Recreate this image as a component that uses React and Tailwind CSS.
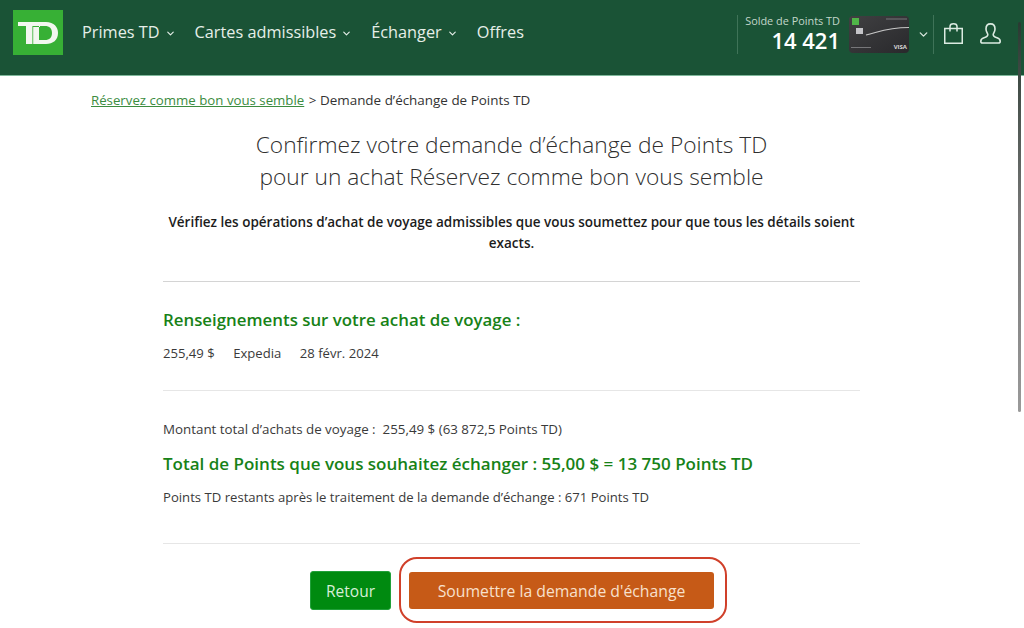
import { ChevronDown } from "lucide-react";

const FONT = "font-['Open_Sans','Noto_Sans',sans-serif]";

const NAV = [
  { label: "Primes TD", menu: true },
  { label: "Cartes admissibles", menu: true },
  { label: "Échanger", menu: true },
  { label: "Offres", menu: false },
];

function TdLogo() {
  return (
    <div className="w-[50px] h-[45px] bg-[#37b035] flex items-center justify-center shrink-0">
      <svg width="40" height="22" viewBox="0 0 40 22">
        <path d="M0 0H22V4H14.4V22H8V4H0Z" fill="#f2f7ef" />
        <path
          fillRule="evenodd"
          d="M15.2 22V5H22V0H28C36 0 40 5 40 11C40 18 35 22 28 22ZM21 4V18H27C31.5 18 34 15.5 34 11C34 6.5 31.5 4 27 4Z"
          fill="#f2f7ef"
        />
      </svg>
    </div>
  );
}

function CardThumb() {
  return (
    <div className="relative w-[60px] h-[37px] mt-[1px] rounded-sm bg-gradient-to-br from-[#404042] to-[#29292c] overflow-hidden shrink-0">
      <div className="absolute left-[3px] top-[2px] w-[7px] h-[7px] bg-[#4fb548]" />
      <div className="absolute left-[7px] top-[12px] w-[7px] h-[6px] bg-[#c4c4c8]" />
      <svg className="absolute inset-0" width="60" height="37" viewBox="0 0 60 37" fill="none">
        <path d="M17 19C30 16 38 11.5 60 11.5" stroke="#c8c8c8" strokeWidth="1.2" />
        <path d="M37 3H58" stroke="#77777a" strokeWidth="1" />
        <path d="M2 31.5H22" stroke="#77777a" strokeWidth="1" />
      </svg>
      <span className="absolute right-[2px] bottom-[2px] text-[6px] leading-[7px] font-bold text-[#d8d8d8]">VISA</span>
    </div>
  );
}

function Header() {
  return (
    <header className="h-[76px] bg-[#1a5336] border-b border-[#7fb89b] flex items-start pt-[10px] pl-[13px] pr-[23px] shrink-0">
      <TdLogo />
      <nav className="flex items-center h-[45px] ml-[19px] gap-[19px] text-[#e6efe9] text-[16.3px]">
        {NAV.map((item) => (
          <span key={item.label} className="flex items-center gap-[5px]">
            {item.label}
            {item.menu && <ChevronDown size={11} strokeWidth={2.5} className="mt-[2px]" />}
          </span>
        ))}
      </nav>
      <div className="ml-auto flex items-start mt-[5px]">
        <div className="h-[39px] border-l border-[#3f7358] pl-[7px] pr-[9px] text-right">
          <div className="text-[10.9px] leading-[13px] text-[#c3d6ca] mt-[-1px]">Solde de Points TD</div>
          <div className="text-[22px] leading-[27px] font-semibold text-white">14 421</div>
        </div>
        <CardThumb />
        <ChevronDown size={13} strokeWidth={2.5} className="text-[#d8e5dd] ml-[8px] mt-[13px]" />
        <div className="h-[39px] border-l border-[#3f7358] ml-[3px] pl-[10px] pt-[8px] flex items-start gap-[17px]">
          <svg width="19" height="21" viewBox="0 0 19 21" fill="none" stroke="#dcebe2" strokeWidth="1.5">
            <path d="M.75 5.5H18.25V20.25H.75Z" />
            <path d="M6 8.5V3.5C6 1.8 7.3.8 9.5.8S13 1.8 13 3.5V8.5" />
          </svg>
          <svg width="21" height="21" viewBox="0 0 21 21" fill="none" stroke="#dcebe2" strokeWidth="1.6">
            <path d="M10.5 .9C13.7 .9 15 3.2 15 6C15 8.6 13.6 10 13.2 11.4C13 13 14.5 14 17 14.8C19.2 15.5 20.2 16.6 20.2 18.2C20.2 19.4 19.6 20 18.4 20H2.6C1.4 20 .8 19.4 .8 18.2C.8 16.6 1.8 15.5 4 14.8C6.5 14 8 13 7.8 11.4C7.4 10 6 8.6 6 6C6 3.2 7.3 .9 10.5 .9Z" />
          </svg>
        </div>
      </div>
    </header>
  );
}

export default function App() {
  return (
    <div className={`relative h-[628px] w-[1024px] overflow-hidden bg-white flex flex-col ${FONT}`}>
      <Header />

      <main className="flex-1 min-h-0 pt-[15px]">
        <div className="pl-[91px] text-[13.25px] leading-[18px] text-[#333]">
          <a className="text-[#3c8c3f] underline">Réservez comme bon vous semble</a>
          <span className="ml-[1px] text-[13.45px]"> &gt; Demande d’échange de Points TD</span>
        </div>

        <div className="w-[697px] ml-[163px]">
          <h1 className="mt-[20px] text-center text-[22.75px] leading-[32px] font-light text-[#2f2f2f]">
            Confirmez votre demande d’échange de Points TD
            <br />
            pour un achat Réservez comme bon vous semble
          </h1>
          <p className="mt-[19px] text-center text-[13.5px] leading-[21px] font-semibold text-[#1c1c1c]">
            Vérifiez les opérations d’achat de voyage admissibles que vous soumettez pour que tous les détails soient
            exacts.
          </p>

          <section className="mt-[27px] border-t border-[#d4d4d4] pt-[26px] pb-[27px]">
            <h2 className="text-[16.85px] leading-[24px] font-semibold text-[#178217]">
              Renseignements sur votre achat de voyage :
            </h2>
            <div className="mt-[11px] flex gap-[18.5px] text-[13.1px] leading-[20px] text-[#3a3a3a]">
              <span>255,49 $</span>
              <span>Expedia</span>
              <span>28 févr. 2024</span>
            </div>
          </section>

          <section className="border-t border-[#e6e6e6] pt-[28px] pb-[36px]">
            <div className="text-[13.35px] leading-[20px] text-[#3a3a3a]">
              Montant total d’achats de voyage :&nbsp; 255,49 $ (63 872,5 Points TD)
            </div>
            <h2 className="mt-[13px] text-[17px] leading-[24px] font-semibold text-[#178217]">
              Total de Points que vous souhaitez échanger : 55,00 $ = 13 750 Points TD
            </h2>
            <div className="mt-[11px] text-[13.13px] leading-[20px] text-[#3a3a3a]">
              Points TD restants après le traitement de la demande d’échange : 671 Points TD
            </div>
          </section>

          <div className="border-t border-[#e6e6e6] pt-[13px] pl-[147px] flex items-center gap-[8px]">
            <button className="w-[81px] h-[39px] pt-[3px] rounded-[3px] bg-[#008a10] border border-[#21a03a] text-[#d8efd8] text-[15.5px]">
              Retour
            </button>
            <div className="w-[328px] h-[66px] rounded-[18px] border-2 border-[#d0402a] flex items-center pl-[8px]">
              <button className="w-[305px] h-[37px] pt-[3px] rounded-[3px] bg-[#c65a17] text-[#f8e0cc] text-[15.75px]">
                Soumettre la demande d'échange
              </button>
            </div>
          </div>
        </div>
      </main>

      {/* overlay scrollbar */}
      <div className="absolute left-[1018px] top-[22px] w-[3px] h-[390px] rounded-full bg-gradient-to-b from-[#2a3a32] via-[#777] to-[#9a9a9a]" />
    </div>
  );
}
